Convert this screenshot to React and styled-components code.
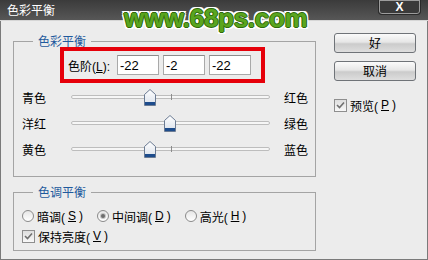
import React from 'react';
import styled, { createGlobalStyle } from 'styled-components';

const GlobalStyle = createGlobalStyle`
  html, body {
    margin: 0;
    padding: 0;
    background: #ececec;
  }
  body {
    font-family: "Liberation Sans", "Noto Sans CJK SC", sans-serif;
    font-size: 12px;
    color: #000;
  }
`;

const Window = styled.div`
  position: relative;
  width: 428px;
  height: 260px;
  background: #ececec;
  box-shadow: inset 1px 0 #7a7a7a, inset -1px 0 #7a7a7a, inset 0 -1px #7a7a7a;
  overflow: hidden;
`;

const TitleBar = styled.div`
  height: 20px;
  display: flex;
  align-items: flex-start;
  justify-content: space-between;
  padding-left: 7px;
  background: linear-gradient(#3b3b3b, #4a4a4a 55%, #575757);
  border-bottom: 1px solid #d6d6d6;
  color: #fff;
  font-family: "Noto Sans CJK SC", sans-serif;
  font-size: 12px;
`;

const Title = styled.span`
  line-height: 20px;
`;

const CloseButton = styled.div`
  width: 43px;
  height: 15px;
  margin-right: 7px;
  box-sizing: border-box;
  display: flex;
  align-items: center;
  justify-content: center;
  background: #3a3a3a;
  border: 1px solid #2a2a2a;
  border-top: none;
  border-radius: 0 0 4px 4px;
  box-shadow: inset 0 0 0 1px #9c9c9c;
  color: #fff;
  font: bold 12px "Liberation Sans", sans-serif;
`;

const Watermark = styled.div`
  position: absolute;
  left: 124px;
  top: 5px;
  font: bold 26px/26px "Liberation Sans", sans-serif;
  letter-spacing: -0.3px;
  color: #5aa51f;
  text-shadow:
    1px 0 #2f6a0c, -1px 0 #2f6a0c, 0 1px #2f6a0c, 0 -1px #2f6a0c,
    2px 0 #fff, -2px 0 #fff, 0 2px #fff, 0 -2px #fff,
    2px 2px #fff, -2px -2px #fff, 2px -2px #fff, -2px 2px #fff;
  pointer-events: none;
`;

const Body = styled.div`
  display: flex;
  gap: 18px;
  padding-left: 13px;
`;

const LeftColumn = styled.div`
  width: 303px;
`;

const Group = styled.fieldset`
  box-sizing: border-box;
  width: 100%;
  min-width: 0;
  margin: ${p => p.$top}px 0 0;
  padding: 0 4px ${p => p.$bottom}px 8px;
  border: 1px solid #a4a4a4;
`;

const Legend = styled.legend`
  margin-left: 11px;
  padding: 0 5px;
  line-height: 12px;
  color: #1f5a9d;
  font-family: "Noto Sans CJK SC", sans-serif;
  font-size: 12px;
`;

const Highlight = styled.div`
  box-sizing: border-box;
  width: 205px;
  height: 36px;
  margin-left: 38px;
  border: 4px solid #e6000a;
  display: flex;
  align-items: center;
  gap: 4px;
  padding-left: 4px;
`;

const FieldLabel = styled.span`
  flex: 0 0 45px;
  white-space: nowrap;
`;

const NumberInput = styled.input`
  box-sizing: border-box;
  width: 42px;
  height: 20px;
  padding: 0 2px;
  border: 1px solid #a9a9a9;
  border-top-color: #8c8c8c;
  background: #fff;
  font: 13px "Liberation Sans", sans-serif;
  color: #000;
  outline: none;
`;

const Sliders = styled.div`
  padding-top: 1px;
`;

const SliderRow = styled.div`
  display: grid;
  grid-template-columns: 49px 199px 1fr;
  align-items: center;
  height: 26px;
`;

const SideLabel = styled.span`
  white-space: nowrap;
  padding-left: ${p => p.$pad || 0}px;
`;

const Track = styled.div`
  position: relative;
  height: 4px;
  box-sizing: border-box;
  border: 1px solid #bdbdbd;
  border-radius: 2px;
  background: #f6f6f6;
`;

const Tick = styled.div`
  position: absolute;
  left: 99px;
  top: -2px;
  width: 1px;
  height: 6px;
  background: #8c8c8c;
`;

const Thumb = styled.svg`
  position: absolute;
  top: -7px;
  margin-left: -6px;
`;

const RadioRow = styled.div`
  display: flex;
  gap: 14px;
  margin-top: 10px;
  height: 16px;
  align-items: center;
`;

const Option = styled.label`
  display: flex;
  align-items: center;
  gap: 3px;
  white-space: nowrap;
`;

const Radio = styled.span`
  position: relative;
  width: 12px;
  height: 12px;
  box-sizing: border-box;
  border-radius: 50%;
  border: 1px solid #8a8a8a;
  background: linear-gradient(#e6e6e6, #ffffff);
  &::after {
    content: "";
    display: ${p => (p.$checked ? 'block' : 'none')};
    position: absolute;
    left: 3px;
    top: 3px;
    width: 4px;
    height: 4px;
    border-radius: 50%;
    background: #6d6d6d;
    box-shadow: 0 0 0 1px #c4c4c4;
  }
`;

const CheckRow = styled.div`
  display: flex;
  height: 16px;
  align-items: center;
  margin-top: ${p => p.$top || 0}px;
`;

const Box = styled.span`
  width: 13px;
  height: 13px;
  box-sizing: border-box;
  border: 1px solid #8e8e8e;
  background: linear-gradient(#dedede, #f8f8f8);
  display: flex;
  align-items: center;
  justify-content: center;
`;

const RightColumn = styled.div`
  display: flex;
  flex-direction: column;
  padding-top: 12px;
`;

const Button = styled.button`
  box-sizing: border-box;
  width: 82px;
  height: 20px;
  margin-bottom: 8px;
  padding: 0;
  border: 1px solid #6f7378;
  border-radius: 3px;
  background: linear-gradient(#fbfbfb, #e6e6e6 45%, #cbcbcb 55%, #dedede);
  font: 12px/18px "Noto Sans CJK SC", sans-serif;
  color: #000;
`;

const values = [
  { left: '青色', right: '红色', value: -22 },
  { left: '洋红', right: '绿色', value: -2 },
  { left: '黄色', right: '蓝色', value: -22 },
];

function Check() {
  return (
    <Box>
      <svg width="9" height="8" viewBox="0 0 9 8">
        <path d="M1 4 L3.5 6.5 L8 1.5" fill="none" stroke="#707070" strokeWidth="1.6" />
      </svg>
    </Box>
  );
}

function SliderThumb({ value }) {
  const left = ((value + 100) / 200) * 199;
  return (
    <Thumb width="12" height="17" viewBox="0 0 12 17" style={{ left }}>
      <defs>
        <linearGradient id="tg" x1="0" y1="0" x2="0" y2="1">
          <stop offset="0" stopColor="#ffffff" />
          <stop offset="1" stopColor="#d9e0ea" />
        </linearGradient>
      </defs>
      <path d="M0.5 5.5 L6 0.5 L11.5 5.5 V16.5 H0.5 Z" fill="url(#tg)" stroke="#6b7b93" />
      <rect x="1" y="13" width="10" height="3" fill="#1d4c8c" />
    </Thumb>
  );
}

export default function App() {
  return (
    <Window>
      <GlobalStyle />
      <TitleBar>
        <Title>色彩平衡</Title>
        <CloseButton>X</CloseButton>
      </TitleBar>
      <Body>
        <LeftColumn>
          <Group $top={14} $bottom={14}>
            <Legend>色彩平衡</Legend>
            <Highlight>
              <FieldLabel>色阶(<u>L</u>):</FieldLabel>
              <NumberInput defaultValue="-22" />
              <NumberInput defaultValue="-2" />
              <NumberInput defaultValue="-22" />
            </Highlight>
            <Sliders>
              {values.map(row => (
                <SliderRow key={row.left}>
                  <SideLabel>{row.left}</SideLabel>
                  <Track>
                    <Tick />
                    <SliderThumb value={row.value} />
                  </Track>
                  <SideLabel $pad={14}>{row.right}</SideLabel>
                </SliderRow>
              ))}
            </Sliders>
          </Group>
          <Group $top={9} $bottom={6}>
            <Legend>色调平衡</Legend>
            <RadioRow>
              <Option><Radio />暗调(<u>S</u>)</Option>
              <Option><Radio $checked />中间调(<u>D</u>)</Option>
              <Option><Radio />高光(<u>H</u>)</Option>
            </RadioRow>
            <CheckRow $top={4}>
              <Option><Check />保持亮度(<u>V</u>)</Option>
            </CheckRow>
          </Group>
        </LeftColumn>
        <RightColumn>
          <Button>好</Button>
          <Button>取消</Button>
          <CheckRow $top={8}>
            <Option><Check />预览(<u>P</u>)</Option>
          </CheckRow>
        </RightColumn>
      </Body>
      <Watermark>www.68ps.com</Watermark>
    </Window>
  );
}
